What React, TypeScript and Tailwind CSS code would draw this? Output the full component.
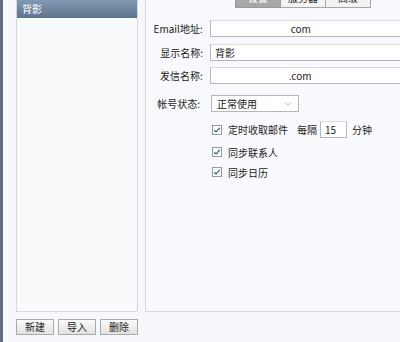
import { ChevronDown } from "lucide-react";

function Checkbox() {
  return (
    <span className="flex h-[10px] w-[10px] shrink-0 items-center justify-center border border-[#8e9cb0] bg-white">
      <svg width="8" height="8" viewBox="0 0 8 8" fill="none">
        <path d="M1.2 4.2 L3.1 6 L6.8 1.8" stroke="#2f5a92" strokeWidth="1.2" />
      </svg>
    </span>
  );
}

const inputCls =
  "h-[17px] border border-[#b4b8be] border-t-[#d9dce0] bg-white leading-[15px]";

export default function App() {
  return (
    <div className="flex h-[342px] w-[400px] overflow-hidden bg-[#f6f8fb] font-['Microsoft_YaHei','Noto_Sans_CJK_SC',sans-serif] text-[10px] text-[#222]">
      <div className="h-full w-[3px] shrink-0 bg-[#5c6f84]" />

      {/* account list */}
      <div className="ml-[13px] flex w-[122px] shrink-0 flex-col">
        <div className="h-[312px] border-x border-b border-[#d5d9df] bg-[#f9fafc]">
          <div className="h-[18px] bg-gradient-to-b from-[#8299b2] to-[#5f758d] pl-[5px] leading-[17px] text-white">
            背影
          </div>
        </div>
        <div className="mt-[7px] flex gap-[4px]">
          {["新建", "导入", "删除"].map((t) => (
            <button
              key={t}
              className="h-[16px] w-[38px] border border-[#ababab] bg-gradient-to-b from-[#fafafa] to-[#e2e2e2] text-[10px] leading-[14px] text-[#222]"
            >
              {t}
            </button>
          ))}
        </div>
      </div>

      {/* settings panel */}
      <div className="ml-[7px] h-[312px] w-[262px] shrink-0 border-b border-l border-[#d5d9df] bg-[#f8f9fc]">
        <div className="-mt-[12px] flex pl-[89px]">
          <div className="h-[20px] w-[46px] border border-[#9a9a9a] bg-[#a7a7a7] text-center leading-[18px] text-white">
            设置
          </div>
          <div className="h-[20px] w-[45px] border border-l-0 border-[#a6a6a6] bg-[#f3f3f3] text-center leading-[18px]">
            服务器
          </div>
          <div className="h-[20px] w-[45px] border border-l-0 border-[#a6a6a6] bg-[#f3f3f3] text-center leading-[18px]">
            高级
          </div>
        </div>

        <div className="mt-[12px] flex items-center">
          <div className="w-[58px] text-right">Email地址:</div>
          <div className={`${inputCls} ml-[7px] w-[200px] pl-[80px]`}>com</div>
        </div>
        <div className="mt-[7px] flex items-center">
          <div className="w-[58px] text-right">显示名称:</div>
          <div className={`${inputCls} ml-[7px] w-[200px] pl-[4px]`}>背影</div>
        </div>
        <div className="mt-[6px] flex items-center">
          <div className="w-[58px] text-right">发信名称:</div>
          <div className={`${inputCls} ml-[7px] w-[200px] pl-[78px]`}>.com</div>
        </div>
        <div className="mt-[11px] flex items-center">
          <div className="w-[54px] text-right">帐号状态:</div>
          <div className="ml-[11px] flex h-[17px] w-[88px] items-center justify-between border border-[#b4b8be] bg-white pl-[5px] pr-[6px]">
            <span>正常使用</span>
            <ChevronDown size={8} strokeWidth={1.5} className="text-[#777]" />
          </div>
        </div>

        <div className="ml-[66px] mt-[9px] flex h-[17px] items-center">
          <Checkbox />
          <span className="ml-[6px]">定时收取邮件</span>
          <span className="ml-[9px]">每隔</span>
          <div className={`${inputCls} ml-[3px] w-[27px] pl-[4px]`}>15</div>
          <span className="ml-[5px]">分钟</span>
        </div>
        <div className="ml-[66px] mt-[4px] flex h-[20px] items-center">
          <Checkbox />
          <span className="ml-[6px]">同步联系人</span>
        </div>
        <div className="ml-[66px] flex h-[20px] items-center">
          <Checkbox />
          <span className="ml-[6px]">同步日历</span>
        </div>
      </div>
    </div>
  );
}
